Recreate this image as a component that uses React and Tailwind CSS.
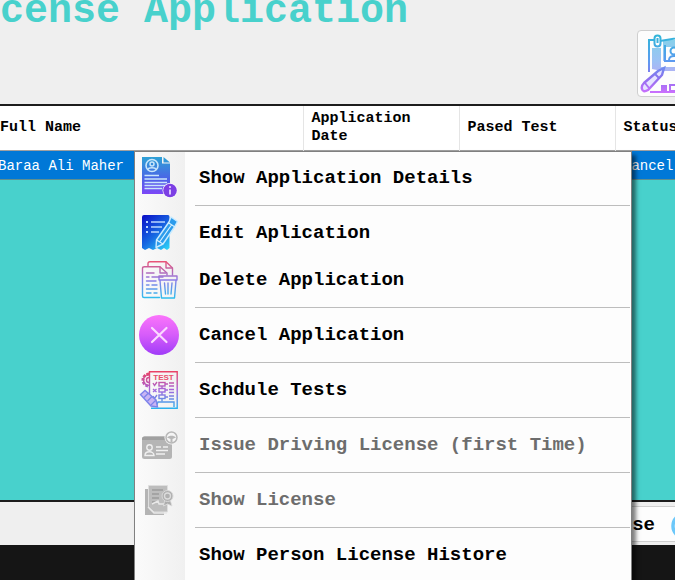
import React from "react";

function Gradient({ id, from, mid, to }) {
  return (
    <linearGradient id={id} x1="0" y1="0" x2="0" y2="40" gradientUnits="userSpaceOnUse">
      <stop offset="0" stopColor={from} />
      <stop offset="0.5" stopColor={mid} />
      <stop offset="1" stopColor={to} />
    </linearGradient>
  );
}

function DetailsIcon() {
  return (
    <svg viewBox="0 0 40 40" className="size-10 overflow-visible" fill="none" aria-hidden="true">
      <defs>
        <Gradient id="details" from="#2f9fd6" mid="#4a66e6" to="#8a3ffc" />
      </defs>
      <path d="M3 -1H23V5.5H31V36H3Z" fill="url(#details)" />
      <path d="M24.5 -1L31 4.5H24.5Z" fill="url(#details)" />
      <g stroke="#c9e6fb">
        <circle cx="13" cy="7.500" r="6" strokeWidth="1.600" />
        <circle cx="13" cy="6" r="2" strokeWidth="1.500" />
        <path d="M9 11.500C9.500 9 16.500 9 17 11.500" strokeWidth="1.500" />
        <path d="M5.500 17.500H20M5.500 21H28M5.500 24.500H28M5.500 27.500H28M5.500 30.500H23" strokeWidth="1.300" />
      </g>
      <circle cx="31" cy="32.500" r="7.500" fill="#fafafa" />
      <circle cx="31" cy="32.500" r="6.800" fill="#7c3fe4" />
      <path d="M31 31.500V36.500" stroke="#e4d4ff" strokeWidth="1.800" />
      <circle cx="31" cy="29" r="1.100" fill="#e4d4ff" />
    </svg>
  );
}

function EditIcon() {
  return (
    <svg viewBox="0 0 40 40" className="size-10 overflow-visible" fill="none" aria-hidden="true">
      <defs>
        <linearGradient id="edit" x1="3" y1="4" x2="33" y2="36" gradientUnits="userSpaceOnUse">
          <stop offset="0" stopColor="#0b12c8" />
          <stop offset="0.5" stopColor="#1768e2" />
          <stop offset="1" stopColor="#2fe0fa" />
        </linearGradient>
      </defs>
      <path d="M5 2H29Q30.500 2 30.500 4V35L28 37L25 35L22 37L18 35L14 37L10 35L6 37L3 35V4Q3 2 5 2Z" fill="url(#edit)" />
      <g stroke="#b8d6ff" strokeWidth="1.300">
        <path d="M12 9H26M12 14H23M12 19H20" />
        <path d="M7 9H9M7 14H9M7 19H9" strokeWidth="2" />
      </g>
      <path d="M32 4L38.500 8.500L35.500 14L24 31L17 34.500L17.500 27L30 9Z" fill="#2d9cec" stroke="#c9ebff" strokeWidth="1.400" strokeLinejoin="round" />
      <path d="M29 9.500L36 14M17.500 27L24 31M32.500 12L20.500 29" stroke="#d7f1ff" strokeWidth="1.200" />
    </svg>
  );
}

function DeleteIcon() {
  return (
    <svg viewBox="0 0 40 40" className="size-10" fill="none" aria-hidden="true">
      <defs>
        <Gradient id="delete" from="#f0506e" mid="#8c7be8" to="#24c4ee" />
      </defs>
      <g stroke="url(#delete)" strokeWidth="1.400" strokeLinecap="round" strokeLinejoin="round">
        <path d="M9 6V3.500Q9 1.700 11 1.700H27L33.500 8V15" />
        <path d="M27 2V8H33" />
        <path d="M20.500 37.500H5Q3.500 37.500 3.500 36V8.500Q3.500 6.800 5.500 6.800H21L28 13V15" />
        <path d="M21 7V13H27" />
        <path d="M7.500 13H15M7.500 17H10M13 17H24M7.500 21H17M7.500 25H10M13 25H18M7.500 29H18M7.500 33H12M15 33H18" />
        <path d="M20 16H38V20H20ZM21 20.500L22.500 38H35.500L37 20.500M25.500 23L26.500 34M29 23V34M33 23L32 34" />
      </g>
    </svg>
  );
}

function CancelIcon() {
  return (
    <svg viewBox="0 0 40 40" className="size-10" fill="none" aria-hidden="true">
      <defs>
        <Gradient id="cancel" from="#fb74fb" mid="#d65cfa" to="#a03cf8" />
      </defs>
      <circle cx="20" cy="20" r="20" fill="url(#cancel)" />
      <path d="M13 13L27.500 27M27.500 13L13 27" stroke="#fbd9ff" strokeWidth="2.200" strokeLinecap="round" />
    </svg>
  );
}

function TestIcon() {
  return (
    <svg viewBox="0 0 40 40" className="size-10" fill="none" aria-hidden="true">
      <defs>
        <Gradient id="test" from="#f0405c" mid="#a566dc" to="#22b8f0" />
      </defs>
      <g stroke="url(#test)" strokeWidth="1.400">
        <path d="M10.500 27V1.700H38.200V38.300H12" />
        <path d="M10 4A6 6 0 0 0 10 16" strokeWidth="3" strokeDasharray="2.500 1.200" />
        <path d="M10 4.500A5.500 5.500 0 0 0 10 15.500M10 7.500A2.500 2.500 0 0 0 10 12.500" />
        <rect x="20" y="12.500" width="6" height="3.500" />
        <rect x="20" y="18.500" width="6" height="3.500" />
        <rect x="20" y="25" width="6" height="3.500" />
        <path d="M23 16V18.500M23 22V25M23 28.500V31.500M26 14H29M26 20H29M26 27H29" />
        <path d="M30 13H35M30 16H35M30 19.500H35M30 22.500H35M30 26H35M30 29H35" />
        <path d="M14 13L15.500 15.500L18 12M14 19L17.500 22M17.500 19L14 22M14 26L15.500 28.500L18 25" />
        <path d="M17 37L19 32H35V37" />
      </g>
      <path d="M1.500 24.500L6 20.500L17 30L18.500 37L12 36Z" fill="#c9b4f4" stroke="#7d83ea" strokeWidth="1.400" />
      <path d="M5 27.500L9.500 23M8.500 31L13 26.500M12 35L17 30" stroke="#7d83ea" strokeWidth="1.300" />
      <text x="24.500" y="10" textAnchor="middle" fill="#e8506c" className="font-['Liberation_Sans',sans-serif] text-[8px] font-bold">TEST</text>
    </svg>
  );
}

function LicenseIcon() {
  return (
    <svg viewBox="0 0 40 40" className="size-10 overflow-visible" fill="none" aria-hidden="true">
      <rect x="3" y="11.500" width="30" height="22.500" rx="2.500" fill="#b5b5b5" />
      <path d="M3 15V14Q3 11.500 5.500 11.500H30.500Q33 11.500 33 14V15Z" fill="#a0a0a0" />
      <g stroke="#f0f0f0" strokeWidth="1.400">
        <circle cx="10.500" cy="22.500" r="2.700" />
        <path d="M6 30.500C6 25.500 15 25.500 15 30.500Z" />
        <path d="M17 22H22M24 22H29M17 25.500H29M17 29H26" />
      </g>
      <circle cx="32.500" cy="12.500" r="7" fill="#f5f5f5" />
      <circle cx="32.500" cy="12.500" r="5.500" stroke="#b8b8b8" strokeWidth="1.500" />
      <path d="M28 12.500C30 10 35 10 37 12.500L33.500 14V17.500H31.500V14Z" fill="#b8b8b8" />
    </svg>
  );
}

function ShowLicenseIcon() {
  return (
    <svg viewBox="0 0 40 40" className="size-10" fill="none" aria-hidden="true">
      <path d="M6 9H25V35H6Z" fill="#b4b4b4" />
      <path d="M9.500 5.500H28.500V32H15L9.500 27Z" fill="#bdbdbd" stroke="#dedede" strokeWidth="1" />
      <path d="M9 27L15 33H28" stroke="#e8e8e8" strokeWidth="1.400" />
      <path d="M13 10H24M13 14H20M13 18H20M13 22H17" stroke="#9c9c9c" strokeWidth="1.500" />
      <path d="M13 24L19 21L20 24H26" stroke="#e8e8e8" strokeWidth="1.400" />
      <path d="M26 19L24.500 26L28.500 24L33 26L31 19Z" fill="#adadad" stroke="#dedede" strokeWidth="0.800" />
      <circle cx="28.500" cy="16" r="5.500" fill="#b0b0b0" stroke="#d8d8d8" strokeWidth="1" />
      <circle cx="28.500" cy="16" r="3" stroke="#dcdcdc" strokeWidth="1.300" />
    </svg>
  );
}

function NewApplicationIcon() {
  return (
    <svg viewBox="0 0 60 60" className="size-15 shrink-0" fill="none" aria-hidden="true">
      <defs>
        <linearGradient id="add" x1="0" y1="0" x2="0" y2="60" gradientUnits="userSpaceOnUse">
          <stop offset="0" stopColor="#2fb8d8" />
          <stop offset="0.450" stopColor="#5b9af0" />
          <stop offset="0.750" stopColor="#8f70ee" />
          <stop offset="1" stopColor="#d070ff" />
        </linearGradient>
      </defs>
      <path d="M12 14H21V33H52V37H22L12 35Z" fill="url(#add)" opacity="0.600" />
      <path d="M23 6H55V13H26V27H23Z" fill="url(#add)" opacity="0.600" />
      <path d="M21 57V51H27V57Z" fill="url(#add)" />
      <g stroke="url(#add)" strokeWidth="2">
        <path d="M9 38V6H14M20 7L55 1V58H10" />
        <rect x="14.500" y="1.500" width="6" height="11" rx="3" />
        <path d="M17.500 4V9M25 11V27H52" />
        <circle cx="34" cy="17" r="3.500" />
        <path d="M29 26C29 20.500 39 20.500 39 26" />
        <path d="M30 51H50V57H30Z" />
        <path d="M18 37L24 34L22 41L8 56Q3 59 2 55Q1 52 4 49Z" fill="#e6e4ff" strokeWidth="2.400" />
        <path d="M15 40L19 44M5 49L9 54" />
      </g>
    </svg>
  );
}

function CloseIcon() {
  return (
    <svg viewBox="0 0 28 28" className="size-7 shrink-0" fill="none" aria-hidden="true">
      <circle cx="14" cy="14" r="12" stroke="#6cc8fa" strokeWidth="3.500" />
      <path d="M9 9L19 19M19 9L9 19" stroke="#6cc8fa" strokeWidth="3" />
    </svg>
  );
}

const groups = [
  [{ label: "Show Application Details", Icon: DetailsIcon }],
  [
    { label: "Edit Aplication", Icon: EditIcon },
    { label: "Delete Application", Icon: DeleteIcon },
  ],
  [{ label: "Cancel Application", Icon: CancelIcon }],
  [{ label: "Schdule Tests", Icon: TestIcon }],
  [{ label: "Issue Driving License (first Time)", Icon: LicenseIcon, disabled: true }],
  [{ label: "Show License", Icon: ShowLicenseIcon, disabled: true }],
  [{ label: "Show Person License Histore" }],
];

function ContextMenu() {
  return (
    <div
      role="menu"
      className="absolute top-[151px] bottom-0 left-[134px] w-[498px] overflow-hidden border-x border-t border-[#808080] bg-[#fdfdfd] shadow-[4px_4px_4px_rgba(0,0,0,0.5)]"
    >
      <div className="min-h-full bg-linear-to-r from-[#fbfbfb] to-[#f0f0f0] bg-size-[50px_100%] bg-no-repeat pt-0.5">
        {groups.map((items, index) => (
          <React.Fragment key={items[0].label}>
            {index > 0 && (
              <div role="separator" className="mr-px ml-15 flex h-2 items-center">
                <div className="h-px w-full bg-[#bdbdbd]" />
              </div>
            )}
            {items.map(({ label, Icon, disabled }) => (
              <button
                key={label}
                type="button"
                role="menuitem"
                disabled={disabled}
                className="flex h-[47px] w-full items-center gap-5 pl-1 text-left text-[19px] font-bold whitespace-nowrap text-black disabled:text-[#6d6d6d]"
              >
                <span className="size-10 shrink-0">{Icon && <Icon />}</span>
                <span className="pt-0.5">{label}</span>
              </button>
            ))}
          </React.Fragment>
        ))}
      </div>
    </div>
  );
}

export default function App() {
  return (
    <div className="relative flex h-screen flex-col overflow-hidden bg-[#151515] font-['Liberation_Mono',monospace] text-black">
      <header className="flex h-[104px] shrink-0 items-start justify-between bg-[#efefef]">
        <h1 className="-mt-3 text-[40px] leading-12 font-bold whitespace-nowrap text-[#48d1cc]">cense Application</h1>
        <button
          type="button"
          aria-label="New application"
          className="mt-[30px] -mr-8 flex h-[67px] w-[70px] shrink-0 items-center justify-start rounded border border-[#cfcfcf] bg-[#fdfdfd] pl-0.5"
        >
          <NewApplicationIcon />
        </button>
      </header>

      <main className="flex-1 overflow-hidden border-y-2 border-[#1c1c1c] bg-[#48d1cc]">
        <table className="w-full table-fixed border-collapse text-left text-[15px] leading-[18px] whitespace-nowrap">
          <colgroup>
            <col />
            <col className="w-[156px]" />
            <col className="w-[156px]" />
            <col className="w-15" />
          </colgroup>
          <thead>
            <tr className="h-11 border-b border-[#a0a0a0] bg-white">
              <th className="border-r border-[#e5e5e5] p-0 font-semibold">Full Name</th>
              <th className="border-r border-[#e5e5e5] px-2 py-0 font-semibold whitespace-normal">Application Date</th>
              <th className="border-r border-[#e5e5e5] px-2 py-0 font-semibold">Pased Test</th>
              <th className="px-2 py-0 font-semibold">Status</th>
            </tr>
          </thead>
          <tbody>
            <tr className="h-[29px] border-b border-[#5f8f8f] bg-[#0078d7] text-sm leading-[18px] text-white">
              <td className="px-0 pt-0.5 pb-0"><span className="-ml-0.5">Baraa Ali Maher</span></td>
              <td />
              <td />
              <td className="px-2 pt-0.5 pb-0">Cancel</td>
            </tr>
          </tbody>
        </table>
      </main>

      <footer className="flex h-[43px] shrink-0 items-center justify-end bg-[#efefef]">
        <button
          type="button"
          className="-mr-8 flex h-9 w-36 shrink-0 items-center justify-end gap-4 rounded border border-[#cfcfcf] bg-[#fdfdfd] pt-1 pr-[7px] text-[19px] font-bold"
        >
          Close
          <CloseIcon />
        </button>
      </footer>
      <div className="h-[35px] shrink-0" />

      <ContextMenu />
    </div>
  );
}
